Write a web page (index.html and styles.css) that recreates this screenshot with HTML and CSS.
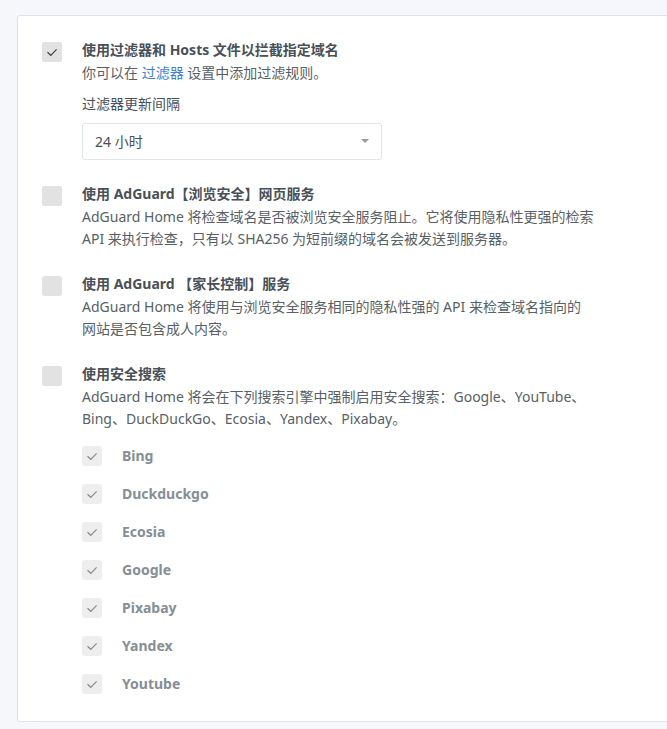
FILE: index.html
```html
<!DOCTYPE html>
<html lang="zh-CN">
<head>
<meta charset="utf-8">
<title>AdGuard Home</title>
<link rel="stylesheet" href="styles.css">
</head>
<body>
<div class="page">
  <div class="card">
    <div class="row">
      <span class="box box--on"><svg viewBox="0 0 20 20"><path d="M5.5 10.2 L8.8 13.3 L14.6 7.4"/></svg></span>
      <div class="body">
        <div class="title">使用过滤器和 Hosts 文件以拦截指定域名</div>
        <div class="desc">你可以在 <a href="#" class="link">过滤器</a> 设置中添加过滤规则。</div>
        <div class="label">过滤器更新间隔</div>
        <div class="select">
          <select class="select__input">
            <option>24 小时</option>
          </select>
        </div>
      </div>
    </div>

    <div class="row">
      <span class="box"></span>
      <div class="body">
        <div class="title">使用 AdGuard【浏览安全】网页服务</div>
        <div class="desc">AdGuard Home 将检查域名是否被浏览安全服务阻止。它将使用隐私性更强的检索 API 来执行检查，只有以 SHA256 为短前缀的域名会被发送到服务器。</div>
      </div>
    </div>

    <div class="row">
      <span class="box"></span>
      <div class="body">
        <div class="title">使用 AdGuard 【家长控制】服务</div>
        <div class="desc">AdGuard Home 将使用与浏览安全服务相同的隐私性强的 API 来检查域名指向的<span class="word">网站</span>是否包含成人内容。</div>
      </div>
    </div>

    <div class="row">
      <span class="box"></span>
      <div class="body">
        <div class="title">使用安全搜索</div>
        <div class="desc">AdGuard Home 将会在下列搜索引擎中强制启用安全搜索：Google、YouTube、Bing、DuckDuckGo、Ecosia、Yandex、Pixabay。</div>
        <ul class="engines">
          <li class="engine"><span class="box box--sub"><svg viewBox="0 0 20 20"><path d="M5.5 10.2 L8.8 13.3 L14.6 7.4"/></svg></span><span class="engine__name">Bing</span></li>
          <li class="engine"><span class="box box--sub"><svg viewBox="0 0 20 20"><path d="M5.5 10.2 L8.8 13.3 L14.6 7.4"/></svg></span><span class="engine__name">Duckduckgo</span></li>
          <li class="engine"><span class="box box--sub"><svg viewBox="0 0 20 20"><path d="M5.5 10.2 L8.8 13.3 L14.6 7.4"/></svg></span><span class="engine__name">Ecosia</span></li>
          <li class="engine"><span class="box box--sub"><svg viewBox="0 0 20 20"><path d="M5.5 10.2 L8.8 13.3 L14.6 7.4"/></svg></span><span class="engine__name">Google</span></li>
          <li class="engine"><span class="box box--sub"><svg viewBox="0 0 20 20"><path d="M5.5 10.2 L8.8 13.3 L14.6 7.4"/></svg></span><span class="engine__name">Pixabay</span></li>
          <li class="engine"><span class="box box--sub"><svg viewBox="0 0 20 20"><path d="M5.5 10.2 L8.8 13.3 L14.6 7.4"/></svg></span><span class="engine__name">Yandex</span></li>
          <li class="engine"><span class="box box--sub"><svg viewBox="0 0 20 20"><path d="M5.5 10.2 L8.8 13.3 L14.6 7.4"/></svg></span><span class="engine__name">Youtube</span></li>
        </ul>
      </div>
    </div>
  </div>
</div>
</body>
</html>
```

FILE: styles.css
```css
* { box-sizing: border-box; }

html, body {
  margin: 0;
  background: #f5f7fb;
  overflow: hidden;
}

body {
  font-family: "Noto Sans", "Noto Sans CJK SC", sans-serif;
  font-size: 14px;
  color: #495057;
}

.page {
  padding: 15px 0 0 17px;
}

.card {
  width: 720px;
  background: #fff;
  border: 1px solid #dfe3ea;
  border-radius: 3px;
  box-shadow: 0 1px 2px rgba(0, 0, 0, 0.04);
  padding: 24px 0 27px 24px;
  display: flex;
  flex-direction: column;
  gap: 24px;
}

.row {
  display: flex;
  align-items: flex-start;
  gap: 20px;
}

.box {
  flex: none;
  width: 20px;
  height: 20px;
  margin-top: 2px;
  border-radius: 3px;
  background: #e2e2e2;
  display: flex;
  align-items: center;
  justify-content: center;
}

.box svg {
  width: 20px;
  height: 20px;
  fill: none;
  stroke: #444;
  stroke-width: 1.2;
}

.box--sub {
  margin-top: 0;
  background: #eeeeee;
}

.box--sub svg {
  stroke: #8a8a8a;
}

.body {
  width: 514px;
}

.title {
  font-weight: 700;
  line-height: 20px;
  color: #495057;
}

.desc {
  margin-top: 2px;
  line-height: 22px;
  color: #585f66;
}

.word {
  white-space: nowrap;
}

.link {
  color: #467fcf;
  text-decoration: none;
}

.label {
  margin-top: 10px;
  line-height: 20px;
  color: #495057;
}

.select {
  position: relative;
  margin-top: 9px;
  width: 300px;
}

.select::after {
  content: "";
  position: absolute;
  right: 13px;
  top: 16px;
  border-left: 4px solid transparent;
  border-right: 4px solid transparent;
  border-top: 4px solid #999;
  pointer-events: none;
}

.select__input {
  appearance: none;
  -webkit-appearance: none;
  width: 100%;
  height: 37px;
  padding: 0 12px;
  border: 1px solid #e0e5ec;
  border-radius: 3px;
  background: #fff;
  font: inherit;
  font-size: 14px;
  color: #495057;
}

.engines {
  list-style: none;
  margin: 16px 0 0;
  padding: 0;
  display: flex;
  flex-direction: column;
  gap: 18px;
}

.engine {
  display: flex;
  align-items: center;
  gap: 20px;
  height: 20px;
}

.engine__name {
  font-weight: 700;
  color: #868e96;
  line-height: 20px;
}
```
